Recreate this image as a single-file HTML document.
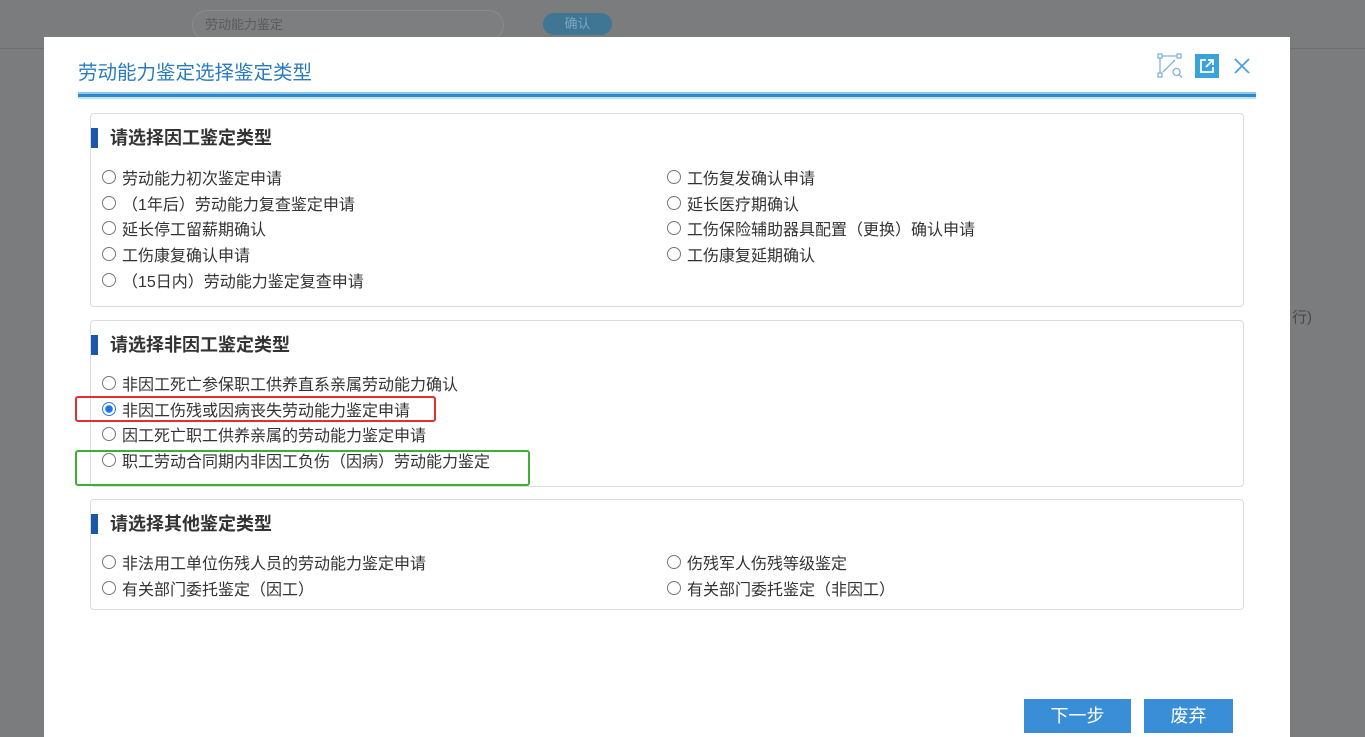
<!DOCTYPE html>
<html><head><meta charset="utf-8"><style>
*{margin:0;padding:0;box-sizing:border-box}
body{width:1365px;height:723px;overflow:hidden;background:#7b7c7e;font-family:"Liberation Sans","Noto Sans CJK SC",sans-serif;position:relative}
.abs{position:absolute}
.modal{left:44px;top:37px;width:1246px;height:700px;background:#fff}
.title{left:78px;top:56px;font-size:19.5px;color:#2a7bbf}
.bar{left:78px;top:92px;width:1178px;height:7px;background:#2f86c8;border-top:2px solid #8ccaf0;border-bottom:2px solid #bfe3f7}
.box{border:1px solid #dcdcdc;border-radius:4px;background:#fff}
.h{font-size:18px;font-weight:bold;color:#333;padding-left:12px;border-left:7px solid #1b57a8;line-height:20px}
.r{font-size:16px;color:#333;display:flex;align-items:center;height:25.8px}
.r i{width:14px;height:14px;border:1px solid #777;border-radius:50%;margin-right:6px;display:inline-block;flex:none}
.r i.on{border:1px solid #2a7be0;background:radial-gradient(circle,#1a73e8 0 3.5px,#fff 4px)}
.btn{background:#3a8ed8;color:#fff;font-size:18px;text-align:center;line-height:34px}
</style></head><body>
<div class="abs" style="left:0;top:48px;width:1365px;height:1px;background:#6e6f71"></div>
<div class="abs" style="left:192px;top:10px;width:312px;height:30px;border:1px solid #8a8b8d;border-radius:15px;background:#7d7e80;color:#5a5b5d;font-size:13px;line-height:28px;padding-left:12px">劳动能力鉴定</div>
<div class="abs" style="left:543px;top:13px;width:69px;height:22px;border-radius:11px;background:#3f7694;color:#7aa6c0;font-size:13px;line-height:22px;text-align:center">确认</div>
<div class="abs" style="left:1292px;top:306px;color:#4a4b4d;font-size:15px">行)</div>
<div class="abs modal"></div>
<div class="abs title">劳动能力鉴定选择鉴定类型</div>
<svg class="abs" style="left:1157px;top:53px" width="28" height="26" viewBox="0 0 28 26" fill="none" stroke="#7fb3d8" stroke-width="1.3"><rect x="1" y="1" width="4" height="4"/><rect x="20" y="1" width="4" height="4"/><rect x="1" y="20" width="4" height="4"/><path d="M5 3h15M3 5v15M6 19l12-12"/><circle cx="19.5" cy="19" r="3.5"/><path d="M22 21.5l3 3"/></svg>
<div class="abs" style="left:1195px;top:54px;width:24px;height:24px;background:#3aa3da"><svg width="24" height="24" viewBox="0 0 24 24" fill="none" stroke="#fff" stroke-width="1.8"><path d="M11 6H6v12h12v-5M13 6h5v5M18 6l-7 7"/></svg></div>
<svg class="abs" style="left:1233px;top:57px" width="18" height="18" viewBox="0 0 18 18" stroke="#4aa3d8" stroke-width="1.8"><path d="M2 2l14 14M16 2L2 16"/></svg>
<div class="abs bar"></div>

<div class="abs box" style="left:90px;top:113px;width:1154px;height:194px"></div>
<div class="abs h" style="left:91px;top:128px">请选择因工鉴定类型</div>
<div class="abs" style="left:102px;top:164px">
<div class="r"><i></i>劳动能力初次鉴定申请</div>
<div class="r"><i></i>（1年后）劳动能力复查鉴定申请</div>
<div class="r"><i></i>延长停工留薪期确认</div>
<div class="r"><i></i>工伤康复确认申请</div>
<div class="r"><i></i>（15日内）劳动能力鉴定复查申请</div></div>
<div class="abs" style="left:667px;top:164px">
<div class="r"><i></i>工伤复发确认申请</div>
<div class="r"><i></i>延长医疗期确认</div>
<div class="r"><i></i>工伤保险辅助器具配置（更换）确认申请</div>
<div class="r"><i></i>工伤康复延期确认</div></div>

<div class="abs box" style="left:90px;top:320px;width:1154px;height:167px"></div>
<div class="abs h" style="left:91px;top:335px">请选择非因工鉴定类型</div>
<div class="abs" style="left:102px;top:370px">
<div class="r"><i></i>非因工死亡参保职工供养直系亲属劳动能力确认</div>
<div class="r"><i class="on"></i>非因工伤残或因病丧失劳动能力鉴定申请</div>
<div class="r"><i></i>因工死亡职工供养亲属的劳动能力鉴定申请</div>
<div class="r"><i></i>职工劳动合同期内非因工负伤（因病）劳动能力鉴定</div></div>
<div class="abs" style="left:75px;top:396px;width:361px;height:26px;border:2px solid #e03030;border-radius:3px"></div>
<div class="abs" style="left:75px;top:450px;width:455px;height:36px;border:2px solid #3cb035;border-radius:3px"></div>

<div class="abs box" style="left:90px;top:499px;width:1154px;height:111px"></div>
<div class="abs h" style="left:91px;top:514px">请选择其他鉴定类型</div>
<div class="abs" style="left:102px;top:549px">
<div class="r"><i></i>非法用工单位伤残人员的劳动能力鉴定申请</div>
<div class="r"><i></i>有关部门委托鉴定（因工）</div></div>
<div class="abs" style="left:667px;top:549px">
<div class="r"><i></i>伤残军人伤残等级鉴定</div>
<div class="r"><i></i>有关部门委托鉴定（非因工）</div></div>

<div class="abs btn" style="left:1024px;top:699px;width:107px;height:34px">下一步</div>
<div class="abs btn" style="left:1144px;top:699px;width:89px;height:34px">废弃</div>
</body></html>
